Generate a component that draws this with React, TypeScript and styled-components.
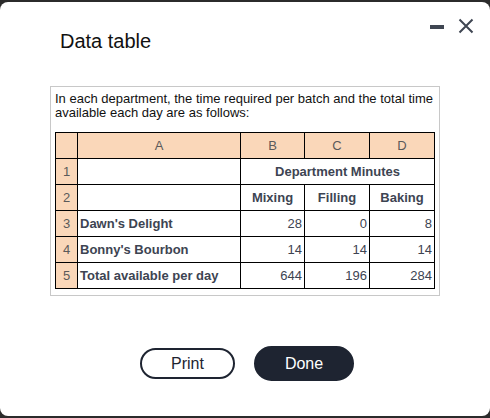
import styled, { createGlobalStyle } from "styled-components";

const GlobalStyle = createGlobalStyle`
  html, body {
    margin: 0;
    padding: 0;
    background: #2b2b2b;
  }
  body {
    font-family: "Liberation Sans", Arial, sans-serif;
  }
`;

const Page = styled.div`
  width: 490px;
  height: 418px;
  padding: 2px 0;
  box-sizing: border-box;
`;

const Dialog = styled.div`
  position: relative;
  height: 414px;
  background: #ffffff;
  border-radius: 8px;
  display: flex;
  flex-direction: column;
  padding: 27px 50px 0 50px;
  box-sizing: border-box;
`;

const Title = styled.h1`
  margin: 0 0 0 10px;
  font-size: 20px;
  font-weight: 400;
  color: #111;
  line-height: 24px;
`;

const WindowControls = styled.div`
  position: absolute;
  top: 16px;
  right: 16px;
  display: flex;
  align-items: center;
  gap: 14px;
`;

const Minimize = styled.span`
  display: block;
  width: 14px;
  height: 4px;
  background: #3f4652;
  margin-top: 2px;
`;

const Frame = styled.div`
  margin-top: 33px;
  border: 1px solid #c8c8c8;
  padding: 5px 5px 6px 4px;
`;

const Intro = styled.p`
  margin: 0 0 12px 0;
  font-size: 13px;
  line-height: 14px;
  color: #111;
`;

const Table = styled.table`
  border-collapse: collapse;
  width: 380px;
  font-size: 13px;
  color: #3d4452;
  table-layout: fixed;
`;

const Cell = styled.td<{ $head?: boolean; $align?: "left" | "right" | "center"; $bold?: boolean }>`
  border: 1px solid #000;
  height: 25px;
  padding: 0 2px;
  background: ${(p) => (p.$head ? "#fad7b9" : "#ffffff")};
  color: ${(p) => (p.$head ? "#5a5a5a" : "#3d4452")};
  text-align: ${(p) => p.$align || "left"};
  font-weight: ${(p) => (p.$bold ? 700 : 400)};
  white-space: nowrap;
`;

const Buttons = styled.div`
  margin-top: 50px;
  display: flex;
  justify-content: center;
  align-items: center;
  gap: 19px;
  padding-left: 4px;
`;

const Button = styled.button<{ $primary?: boolean }>`
  font-family: "Liberation Sans", Arial, sans-serif;
  font-size: 16px;
  border-radius: 18px;
  cursor: pointer;
  border: 2px solid #1e2431;
  background: ${(p) => (p.$primary ? "#1e2431" : "#ffffff")};
  color: ${(p) => (p.$primary ? "#ffffff" : "#1e2431")};
  width: ${(p) => (p.$primary ? "100px" : "95px")};
  height: ${(p) => (p.$primary ? "35px" : "31px")};
`;

const rows = [
  { n: "3", label: "Dawn's Delight", v: ["28", "0", "8"] },
  { n: "4", label: "Bonny's Bourbon", v: ["14", "14", "14"] },
  { n: "5", label: "Total available per day", v: ["644", "196", "284"] },
];

export default function App() {
  return (
    <Page>
      <GlobalStyle />
      <Dialog>
        <WindowControls>
          <Minimize />
          <svg width="16" height="16" viewBox="0 0 16 16">
            <path d="M1.5 1.5 L14.5 14.5 M14.5 1.5 L1.5 14.5" stroke="#3f4652" strokeWidth="2" fill="none" />
          </svg>
        </WindowControls>
        <Title>Data table</Title>
        <Frame>
          <Intro>
            In each department, the time required per batch and the total time
            available each day are as follows:
          </Intro>
          <Table>
            <colgroup>
              <col style={{ width: 22 }} />
              <col style={{ width: 163 }} />
              <col style={{ width: 64 }} />
              <col style={{ width: 65 }} />
              <col style={{ width: 65 }} />
            </colgroup>
            <tbody>
              <tr>
                <Cell $head />
                <Cell $head $align="center">A</Cell>
                <Cell $head $align="center">B</Cell>
                <Cell $head $align="center">C</Cell>
                <Cell $head $align="center">D</Cell>
              </tr>
              <tr>
                <Cell $head $align="center">1</Cell>
                <Cell />
                <Cell colSpan={3} $align="center" $bold>Department Minutes</Cell>
              </tr>
              <tr>
                <Cell $head $align="center">2</Cell>
                <Cell />
                <Cell $align="center" $bold>Mixing</Cell>
                <Cell $align="center" $bold>Filling</Cell>
                <Cell $align="center" $bold>Baking</Cell>
              </tr>
              {rows.map((r) => (
                <tr key={r.n}>
                  <Cell $head $align="center">{r.n}</Cell>
                  <Cell $bold>{r.label}</Cell>
                  {r.v.map((v, i) => (
                    <Cell key={i} $align="right">{v}</Cell>
                  ))}
                </tr>
              ))}
            </tbody>
          </Table>
        </Frame>
        <Buttons>
          <Button>Print</Button>
          <Button $primary>Done</Button>
        </Buttons>
      </Dialog>
    </Page>
  );
}
